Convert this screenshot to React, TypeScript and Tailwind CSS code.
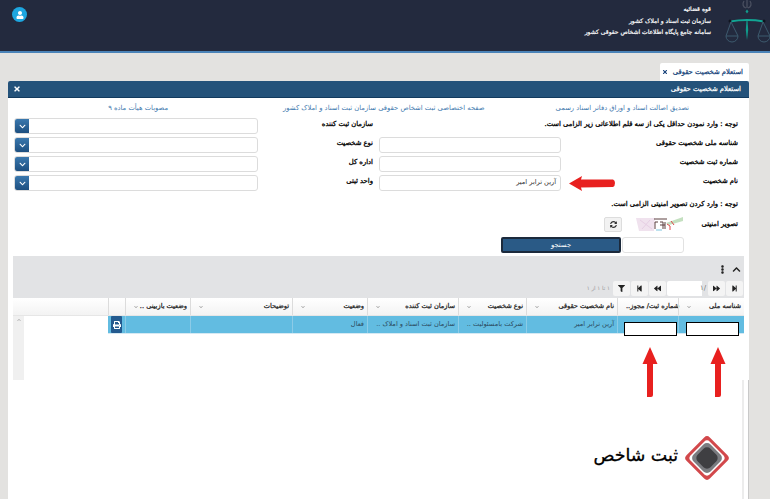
import type { ReactNode } from "react";
import { FaTimes, FaChevronDown, FaChevronUp, FaEllipsisV, FaFilter, FaPrint, FaSyncAlt, FaStepForward, FaStepBackward, FaForward, FaBackward, FaUser } from "react-icons/fa";

const font = { fontFamily: '"DejaVu Sans", sans-serif' };

function Select() {
  return (
    <div className="flex h-[16px] w-[244px] overflow-hidden rounded-[3px] border border-[#dcdcdc] bg-white">
      <div className="flex w-[14px] items-center justify-center bg-gradient-to-b from-[#3a78ae] to-[#1d4f80] text-white">
        <FaChevronDown className="h-[7px] w-[7px]" />
      </div>
    </div>
  );
}

function TextInput({ value }: { value?: string }) {
  return (
    <div className="flex h-[16px] w-[182px] items-center rounded-[3px] border border-[#dcdcdc] bg-white pr-[4px] text-[6.6px] text-[#333]" dir="rtl">
      {value}
    </div>
  );
}

function Pager({ children }: { children: ReactNode }) {
  return <div className="flex h-[15px] w-[17px] items-center justify-center rounded-[2px] bg-[#f4f4f4] text-[#222]">{children}</div>;
}

const cols = [
  { w: "w-[66px]", h: "شناسه ملی", v: "", arrow: true },
  { w: "w-[61px]", h: "شماره ثبت/ مجوز..", v: "", arrow: false },
  { w: "w-[91px]", h: "نام شخصیت حقوقی", v: "آرین ترابر امیر", arrow: true },
  { w: "w-[68px]", h: "نوع شخصیت", v: "شرکت بامسئولیت ..", arrow: true },
  { w: "w-[91px]", h: "سازمان ثبت کننده", v: "سازمان ثبت اسناد و املاک ..", arrow: true },
  { w: "w-[75px]", h: "وضعیت", v: "فعال", arrow: true },
  { w: "w-[102px]", h: "توضیحات", v: "", arrow: true },
  { w: "w-[65px]", h: "وضعیت بازبینی ..", v: "", arrow: true },
];

function UpArrow() {
  return (
    <svg width="16" height="50" viewBox="0 0 16 50" className="block">
      <path d="M8 0 L15.5 17 L11 17 L11 48 Q11 50 9 50 L5 50 L5 17 L0.5 17 Z" fill="#e8201f" />
    </svg>
  );
}

const label = "[-webkit-text-stroke:0.3px_#000] text-[6.8px] text-black";

export default function App() {
  return (
    <div className="relative h-[499px] w-[770px] overflow-hidden bg-[#e3e2e0]" style={font}>
      <header className="flex h-[53px] items-start justify-between border-b-2 border-[#4a83b8] bg-[#232a3e]">
        <div className="ml-[12px] mt-[7px] flex h-[15px] w-[15px] items-center justify-center rounded-full bg-[#1da6e0] text-white">
          <FaUser className="h-[8px] w-[8px]" />
        </div>
        <div className="flex items-start">
          <div className="mt-[3px] text-right text-[6px] leading-[11.5px] text-white [-webkit-text-stroke:0.2px_#fff]" dir="rtl">
            <div>قوه قضائیه</div>
            <div>سازمان ثبت اسناد و املاک کشور</div>
            <div>سامانه جامع پایگاه اطلاعات اشخاص حقوقی کشور</div>
          </div>
          <svg width="46" height="44" viewBox="0 0 46 44" className="ml-[13px]">
            <path d="M20 1c-2 3-1 6 2 7M26 1c2 3 1 6-2 7M23 0v8" stroke="#4a5060" strokeWidth="1.3" fill="none" />
            <path d="M23 9.5l1.5 2-1.5 2-1.5-2z" fill="#109c8c" />
            <path d="M22.5 20h1L24.2 30 23 40 21.8 30z" fill="#109c8c" />
            <path d="M6 21.5 Q23 18.5 40 21.5" stroke="#12a594" strokeWidth="2" fill="none" />
            <circle cx="6" cy="21" r="1.5" fill="#10141e" />
            <circle cx="40" cy="21" r="1.5" fill="#10141e" />
            <path d="M7 22L2 36h12zM39 22l-5 14h12zM2 36a6 6 0 0 0 12 0M34 36a6 6 0 0 0 12 0" stroke="#3d5a6e" strokeWidth="1" fill="none" />
          </svg>
        </div>
      </header>

      <div className="flex justify-end pr-[21px] pt-[10px]">
        <div className="flex h-[18px] w-[89px] items-center justify-between rounded-t-[2px] bg-white pl-[2px] pr-[6px] text-[6.8px] text-[#123e78] [-webkit-text-stroke:0.25px_#123e78]">
          <FaTimes className="h-[6px] w-[6px]" />
          <span className="whitespace-nowrap" dir="rtl">استعلام شخصیت حقوقی</span>
        </div>
      </div>

      <main className="ml-[8px] h-[418px] w-[741px] overflow-hidden rounded-t-[2px] bg-white">
        <div className="flex h-[17px] items-center justify-between border-b border-[#123a5e] bg-[#24527a] pl-[5px] pr-[8px] text-white">
          <FaTimes className="h-[8px] w-[8px]" />
          <span className="whitespace-nowrap text-[6.8px] [-webkit-text-stroke:0.25px_#fff]" dir="rtl">استعلام شخصیت حقوقی</span>
        </div>

        <div className="flex h-[20px] items-center whitespace-nowrap text-[6.8px] text-[#3f79ae]" dir="rtl">
          <span className="mr-[60px]">تصدیق اصالت اسناد و اوراق دفاتر اسناد رسمی</span>
          <span className="mr-[71px]">صفحه اختصاصی ثبت اشخاص حقوقی سازمان ثبت اسناد و املاک کشور</span>
          <span className="mr-[115px]">مصوبات هیأت ماده ۹</span>
        </div>

        <div className="flex pl-[6px] pr-[11px]">
          <div className="flex flex-col gap-[3px]">
            <Select />
            <Select />
            <Select />
            <Select />
          </div>
          <div className={`flex w-[115px] flex-col ${label}`} dir="rtl">
            {["سازمان ثبت کننده", "نوع شخصیت", "اداره کل", "واحد ثبتی"].map((t) => (
              <div key={t} className="h-[19px] leading-[13px]">{t}</div>
            ))}
          </div>
          <div className="ml-[6px] flex flex-col gap-[3px] pt-[19px]">
            <TextInput />
            <TextInput />
            <TextInput value="آرین ترابر امیر" />
          </div>
          <div className={`flex w-[177px] flex-col ${label}`} dir="rtl">
            <div className="h-[19px] whitespace-nowrap leading-[12px]">توجه : وارد نمودن حداقل یکی از سه قلم اطلاعاتی زیر الزامی است.</div>
            {["شناسه ملی شخصیت حقوقی", "شماره ثبت شخصیت", "نام شخصیت"].map((t) => (
              <div key={t} className="h-[19px] leading-[13px]">{t}</div>
            ))}
          </div>
        </div>

        <div className={`mt-[4px] pr-[11px] leading-[12px] ${label}`} dir="rtl">توجه : وارد کردن تصویر امنیتی الزامی است.</div>

        <div className={`mt-[6px] flex h-[16px] items-center pr-[11px] ${label}`} dir="rtl">
          <span className="w-[54px] whitespace-nowrap">تصویر امنیتی</span>
          <svg width="48" height="16" viewBox="0 0 48 16" className="ml-[14px]">
            <rect width="48" height="16" fill="#fff" />
            <path d="M0 2h19l-1 13H3z" fill="#f0e2ee" />
            <path d="M4 4l12 9M6 13l8-9" stroke="#e6cfe4" strokeWidth="1" />
            <path d="M30 7l17-6v4l-14 4z" fill="#c4e0c0" />
            <path d="M18 3h13M19 6h3M24 6h3v7M19 6v7M29 6v7M24 9h5" stroke="#5c4040" strokeWidth="1" fill="none" />
            <path d="M31 8l3 2v4M35 5l3 4" stroke="#e0484a" strokeWidth="1" fill="none" />
            <path d="M20 14h6" stroke="#a8d8ea" strokeWidth="1.5" />
          </svg>
          <div className="flex h-[15px] w-[18px] items-center justify-center rounded-[2px] border border-[#ddd] bg-[#f2f2f2] text-[#333]">
            <FaSyncAlt className="h-[7px] w-[7px]" />
          </div>
        </div>

        <div className="mt-[5px] flex pr-[65px]" dir="rtl">
          <div className="h-[16px] w-[62px] rounded-[3px] border border-[#e2e2e2] bg-white" />
          <div className="ml-0 mr-[1px] flex h-[16px] w-[120px] items-center justify-center rounded-[2px] border-2 border-[#1c2a3c] bg-[#2a5a86] text-[6.8px] text-white">جستجو</div>
        </div>

        <section className="ml-[5px] mt-[3px] w-[731px]">
          <div className="h-[42px] bg-[#e2e3e5] pr-[1px]">
            <div className="flex h-[25px] items-center justify-end gap-[5px] pr-[2px] pt-[1px] text-[#222]">
              <FaEllipsisV className="h-[9px] w-[9px]" />
              <FaChevronUp className="h-[9px] w-[9px]" />
            </div>
            <div className="flex h-[15px] items-center justify-end gap-[1px] text-[#222]">
              <span className="mr-[2px] text-[5.5px] text-[#999]" dir="rtl">۱ تا ۱ از ۱</span>
              <Pager><FaFilter className="h-[7px] w-[7px]" /></Pager>
              <Pager><FaStepBackward className="h-[7px] w-[7px]" /></Pager>
              <Pager><FaBackward className="h-[7px] w-[7px]" /></Pager>
              <div className="flex h-[15px] w-[40px] items-center justify-end rounded-[2px] bg-[linear-gradient(to_right,#fff_35px,transparent_35px)] pr-[1px] text-[7px] text-[#777]">۱/</div>
              <Pager><FaForward className="h-[7px] w-[7px]" /></Pager>
              <Pager><FaStepForward className="h-[7px] w-[7px]" /></Pager>
            </div>
          </div>

          <div className="flex h-[18px] flex-row-reverse border-b border-[#e6e6e6] bg-gradient-to-b from-white to-[#f3f3f3]">
            {cols.map((c) => (
              <div key={c.h} className={`${c.w} flex items-center justify-between border-l border-[#dcdcdc] pl-[8px] pr-[3px] text-[6.6px] text-[#222] [-webkit-text-stroke:0.25px_#222]`}>
                {c.arrow ? <FaChevronDown className="h-[4px] w-[4px] shrink-0 text-[#999]" /> : <span />}
                <span className="whitespace-nowrap" dir="rtl">{c.h}</span>
              </div>
            ))}
            <div className="w-[17px] border-l border-[#dcdcdc]" />
            <div className="flex-1" />
          </div>

          <div className="flex h-[64px]">
            <div className="flex w-[11px] justify-center bg-[#f0f0f0] pt-[2px] text-[#aaa]">
              <FaChevronUp className="h-[4px] w-[4px]" />
            </div>
            <div className="w-[84px]" />
            <div className="flex h-[18px] flex-1 flex-row-reverse border-b border-[#d5e9f3] bg-[#62bce1]">
              {cols.map((c) => (
                <div key={c.h} className={`${c.w} flex items-center overflow-hidden whitespace-nowrap border-l border-[#8ccbe7] px-[3px] text-[6.6px] text-[#2b4a5e]`} dir="rtl">{c.v}</div>
              ))}
              <div className="flex w-[17px] items-center justify-center">
                <div className="flex h-[17px] w-[11px] items-center justify-center rounded-[1px] bg-[#235a8f] text-white">
                  <FaPrint className="h-[8px] w-[8px]" />
                </div>
              </div>
            </div>
          </div>
        </section>
      </main>

      <div className="absolute left-[624px] top-[322px] h-[14px] w-[53px] border border-black bg-white" />
      <div className="absolute left-[686px] top-[322px] h-[14px] w-[53px] border border-black bg-white" />
      <div className="absolute left-[642px] top-[347px]"><UpArrow /></div>
      <div className="absolute left-[710px] top-[347px]"><UpArrow /></div>

      <div className="absolute left-[742px] top-[380px] h-[119px] w-[2px] bg-[#ececec]" />
      <div className="absolute left-[748px] top-[380px] h-[119px] w-[1px] bg-[#c9c9c9]" />

      <div className="absolute left-[531px] top-[434px] flex w-[200px] flex-row-reverse items-center">
        <svg width="48" height="48" viewBox="0 0 48 48">
          <rect x="7.5" y="7.5" width="33" height="33" rx="4" transform="rotate(45 24 24)" fill="#d2484b" />
          <rect x="10.5" y="10.5" width="27" height="27" rx="4" transform="rotate(45 24 24)" fill="#fff" />
          <rect x="12" y="12" width="24" height="24" rx="5" transform="rotate(45 24 24)" fill="#7b7c80" />
          <rect x="15" y="15" width="18" height="18" rx="5" transform="rotate(45 24 24)" fill="#3f3f42" />
        </svg>
        <span className="mb-[5px] mr-[5px] whitespace-nowrap text-[17.4px] text-black [-webkit-text-stroke:0.3px_#000]" dir="rtl">ثبت شاخص</span>
      </div>

      <svg width="46" height="15" viewBox="0 0 46 15" className="absolute left-[569px] top-[176px]">
        <path d="M0 7.5 L13 0 L12 3.5 L44 3.5 Q46 4 46 7 Q46 10 44 11 L12 11.5 L13 15 Z" fill="#e8201f" />
      </svg>
    </div>
  );
}
